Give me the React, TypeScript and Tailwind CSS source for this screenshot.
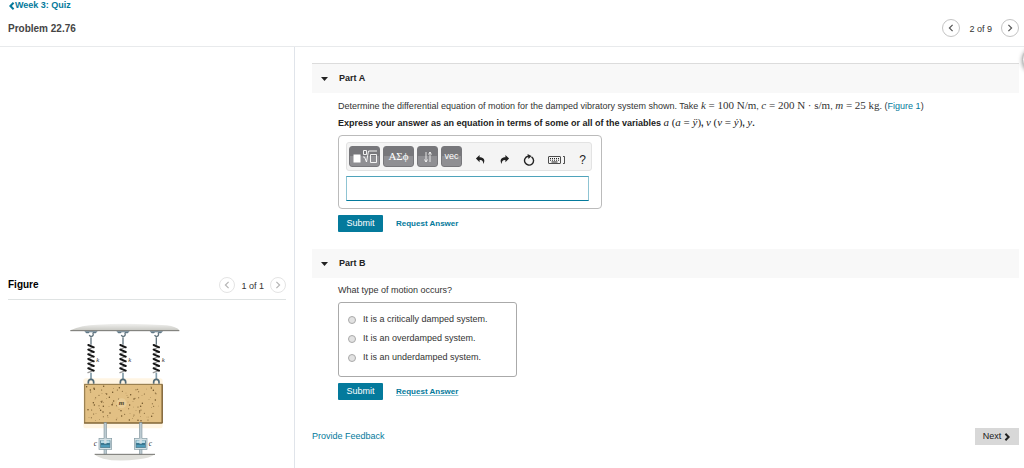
import React, { useState } from "react";

const Chevron = ({ dir, className, width = 2 }: { dir: "left" | "right"; className?: string; width?: number }) => (
  <svg viewBox="0 0 10 10" fill="none" stroke="currentColor" strokeWidth={width} className={className} aria-hidden="true">
    <path d={dir === "left" ? "M7 1 L3 5 L7 9" : "M3 1 L7 5 L3 9"} />
  </svg>
);

const speckles = Array.from({ length: 110 }, (_, i) => ({
  x: 80 + ((i * 83 + ((i * i * 7) % 41)) % 220),
  y: 229 + ((i * 47 + ((i * i * 11) % 29)) % 104),
  r: 1 + (i % 3) * 0.6,
}));

const springs = [93, 189, 289];
const dampers = [136, 242];

function Spring({ x }: { x: number }) {
  return (
    <g>
      <path d={`M${x - 20} 64 h40 l-6 6 h-7 l-3 -3 h-8 l-3 3 h-7z`} fill="#607887" />
      <path d={`M${x + 5} 69 a6 6 0 1 1 -10 6 M${x} 82 V104`} fill="none" stroke="#62747e" strokeWidth="4" />
      <path d={`M${x} 188 V208`} stroke="#849da9" strokeWidth="5" />
      <path d={`M${x - 8} 221 v-5 a8 8 0 0 1 16 0 v5`} fill="none" stroke="#526b78" strokeWidth="5" />
      {[0, 1, 2, 3, 4, 5].map((i) => (
        <g key={i} strokeLinecap="round">
          <path d={`M${x - 9} ${118 + i * 14} L${x + 9} ${111 + i * 14}`} stroke="#9a9a9a" strokeWidth="4" />
          <path d={`M${x - 8} ${105 + i * 14} L${x + 8} ${112 + i * 14}`} stroke="#151515" strokeWidth="6" />
        </g>
      ))}
      <text x={x + 16} y="156" fontSize="20" fontStyle="italic" fill="#333">k</text>
    </g>
  );
}

function Damper({ x }: { x: number }) {
  return (
    <g>
      <rect x={x - 4} y="338" width="8" height="95" fill="#bccbd2" stroke="#71838c" strokeWidth="1.5" />
      <rect x={x - 19} y="385" width="38" height="33" fill="#d5e2e6" stroke="#8299a3" strokeWidth="2" />
      <rect x={x - 14} y="392" width="28" height="21" fill="#4f9cba" stroke="#4b7688" strokeWidth="2" />
      <rect x={x - 13} y="391" width="26" height="8" fill="#b9dbe6" />
      <path d={`M${x - 13} 402 H${x + 13}`} stroke="#285568" strokeWidth="3" />
      <path d={`M${x} 385 V401`} stroke="#d7e1e5" strokeWidth="7" />
    </g>
  );
}

function VibrationFigure() {
  return (
    <svg viewBox="0 0 390 474" className="ml-[60px] block w-[130px] font-['Liberation_Serif',serif]" role="img" aria-label="Mass m supported by three springs k and two dampers c">
      <defs>
        <linearGradient id="ceiling" x2="0" y2="1">
          <stop stopColor="#f0f0ee" /><stop offset="1" stopColor="#c9c9c4" />
        </linearGradient>
      </defs>
      <path d="M31 61 Q65 45 110 44 Q210 38 320 46 Q350 50 358 61Z" fill="url(#ceiling)" />
      <path d="M31 62 H358" stroke="#70706b" strokeWidth="3" />
      <rect x="70" y="205" width="238" height="150" rx="8" fill="#fff5e3" />
      {springs.map((x) => <Spring key={x} x={x} />)}
      <rect x="74" y="223" width="232" height="116" fill="#e2c084" stroke="#8b7141" strokeWidth="3" />
      <path d="M72 339 H307 V223" fill="none" stroke="#7c6033" strokeWidth="3" />
      {speckles.map((p, i) => <circle key={i} cx={p.x} cy={p.y} r={p.r} fill="#6c5027" />)}
      <circle cx="185" cy="280" r="15" fill="#e9cc96" />
      <text x="176" y="286" fontSize="21" fontStyle="italic" fontWeight="bold" fill="#4d4128">m</text>
      {dampers.map((x) => <Damper key={x} x={x} />)}
      <text x="101" y="407" fontSize="22" fontStyle="italic" fill="#333">c</text>
      <text x="266" y="407" fontSize="22" fontStyle="italic" fill="#333">c</text>
      <path d="M104 433 H285 Q270 445 236 448 Q170 456 130 446 Q112 442 104 433Z" fill="#dfdfda" />
      <path d="M104 433 H285" stroke="#74746f" strokeWidth="3" />
    </svg>
  );
}

function PartHeader({ title, top, open, onToggle }: { title: string; top?: boolean; open: boolean; onToggle: () => void }) {
  return (
    <h2 className={top ? "border-t border-[#dcdcdc] bg-[#f8f8f8]" : "bg-[#f8f8f8]"}>
      <button type="button" aria-expanded={open} onClick={onToggle} className="flex h-[29px] w-full items-center gap-[11px] pl-[9px] text-left text-[9px] font-bold text-[#222]">
        <svg viewBox="0 0 7 4" className="h-1 w-[7px]" aria-hidden="true"><path d="M0 0h7L3.5 4z" fill="currentColor" /></svg>
        {title}
      </button>
    </h2>
  );
}

const Var = ({ children }: { children: React.ReactNode }) => <i className="font-['Liberation_Serif',serif] text-[11px] font-normal">{children}</i>;
const Maths = ({ children }: { children: React.ReactNode }) => <span className="font-['Liberation_Serif',serif] text-[11px] font-normal">{children}</span>;

function Actions({ underlined }: { underlined?: boolean }) {
  return (
    <div className="flex items-center gap-[13px]">
      <button type="submit" className="h-[17px] w-[45px] rounded-[1px] bg-[#047a9c] text-[9px] text-white">Submit</button>
      <a href="#answer" className={underlined ? "text-[8px] font-bold text-[#047a9c] underline decoration-[#8fc4d3]" : "text-[8px] font-bold text-[#047a9c]"}>Request Answer</a>
    </div>
  );
}

const keyStyle = "flex h-[21px] items-center justify-center rounded-[3px] border border-[#77777b] bg-linear-to-b from-[#77777b] from-50% to-[#8f8f93] to-50% text-white";

function Toolbar() {
  return (
    <div className="flex h-[29px] items-start rounded-[3px] border border-[#e3e3e3] bg-[#f4f4f4] pt-[3px] pl-[2px] text-[#222]">
      <div className="flex gap-[3px]">
        <button type="button" aria-label="Templates" className={`${keyStyle} w-[31px]`}>
          <svg viewBox="0 0 27 17" className="h-[17px] w-[27px]" fill="none" stroke="white" aria-hidden="true">
            <rect x="2.500" y="6.500" width="7" height="8" fill="white" stroke="none" />
            <path d="M12.500 2.500h3v4h-3z M12 9l1.500 0 2 5 2-11h8.500 M19.500 6.500h6v8h-6z" strokeWidth="0.9" />
          </svg>
        </button>
        <button type="button" className={`${keyStyle} w-[31px] font-['Liberation_Serif',serif] text-[11px]`}>ΑΣϕ</button>
        <button type="button" aria-label="Arrows" className={`${keyStyle} w-[21px]`}>
          <svg viewBox="0 0 10 12" className="h-3 w-2.5" fill="none" stroke="white" strokeWidth="0.8" aria-hidden="true">
            <path d="M3 1v10M1.500 8.500 3 11l1.500-2.500M7 11V1M5.500 3.500 7 1l1.500 2.500" />
          </svg>
        </button>
        <button type="button" className={`${keyStyle} w-[21px] text-[9px]`}>vec</button>
      </div>
      <div className="flex h-[27px] flex-1 items-center justify-between pr-[5px] pl-[13px]">
        <button type="button" aria-label="Undo">
          <svg viewBox="0 0 12 12" className="size-[11px]" aria-hidden="true"><path d="M5 1 1 5l4 4V6.700c3-.2 4 1 4 4.300 3-5 0-7.500-4-7.500z" fill="currentColor" /></svg>
        </button>
        <button type="button" aria-label="Redo">
          <svg viewBox="0 0 12 12" className="size-[11px]" aria-hidden="true"><path d="M7 1l4 4-4 4V6.700c-3-.2-4 1-4 4.300-3-5 0-7.500 4-7.500z" fill="currentColor" /></svg>
        </button>
        <button type="button" aria-label="Reset">
          <svg viewBox="0 0 12 12" className="size-3" fill="none" stroke="currentColor" strokeWidth="1.4" aria-hidden="true">
            <path d="M8.500 2.800A4.500 4.500 0 1 1 5 2.200" /><path d="M4.500 0l4 2L5.500 5z" fill="currentColor" stroke="none" />
          </svg>
        </button>
        <button type="button" aria-label="Keyboard" className="pt-px">
          <svg viewBox="0 0 18 8" className="h-2 w-[18px]" fill="none" stroke="currentColor" aria-hidden="true">
            <rect x=".5" y=".5" width="12" height="7" rx=".5" strokeWidth=".8" />
            <path d="M2 2.500h9M2 4.200h9" strokeDasharray="1 1" /><path d="M3.500 6h6" />
            <path d="M15 .5h1.500v7H15" strokeWidth=".8" />
          </svg>
        </button>
        <button type="button" aria-label="Help" className="text-[12px]">?</button>
      </div>
    </div>
  );
}

function Pager({ label, faint }: { label: string; faint?: boolean }) {
  const circle = faint
    ? "flex size-4 items-center justify-center rounded-full border border-[#e4e4e4] text-[#b5b5b5]"
    : "flex size-[18px] items-center justify-center rounded-full border border-[#c4c4c4] text-[#555]";
  return (
    <div className={faint ? "flex items-center gap-[6px]" : "flex items-center gap-[9px]"}>
      <button type="button" aria-label="Previous" className={circle}><Chevron dir="left" width={1.500} className="size-2" /></button>
      <span className="pt-[3px] text-[9px] text-[#333]">{label}</span>
      <button type="button" aria-label="Next item" className={circle}><Chevron dir="right" width={1.500} className="size-2" /></button>
    </div>
  );
}

const options = ["It is a critically damped system.", "It is an overdamped system.", "It is an underdamped system."];

export default function App() {
  const [openA, setOpenA] = useState(true);
  const [openB, setOpenB] = useState(true);
  const [choice, setChoice] = useState("");
  return (
    <div className="relative flex min-h-screen flex-col overflow-hidden bg-white font-['Liberation_Sans',Arial,sans-serif] text-[9px] text-[#333]">
      <header className="flex h-[47px] items-start justify-between border-b border-[#e8eaec] pr-[5px] pl-2">
        <div>
          <a href="#week-3" className="flex h-3 items-center font-bold text-[#047a9c]">
            <Chevron dir="left" width={2.500} className="mr-[-1px] size-2" />Week 3: Quiz
          </a>
          <h1 className="mt-[9px] text-[10px] leading-4 font-bold text-[#444]">Problem 22.76</h1>
        </div>
        <div className="pt-[19px]"><Pager label="2 of 9" /></div>
      </header>

      <div className="flex flex-1">
        <aside className="w-[295px] shrink-0 border-r border-[#e0e4ea] pt-[230px]">
          <div className="mr-[8px] ml-2 flex h-[23px] items-start justify-between border-b border-[#dfe3e3]">
            <h2 className="text-[10px] leading-4 font-bold text-black">Figure</h2>
            <Pager label="1 of 1" faint />
          </div>
          <div className="mt-[10px]"><VibrationFigure /></div>
        </aside>

        <main className="min-w-0 flex-1 pt-4 pr-[5px] pl-[17px]">
          <PartHeader title="Part A" top open={openA} onToggle={() => setOpenA(!openA)} />
          {openA && (
            <form className="px-[26px] pt-1 pb-[17px]" onSubmit={(e) => e.preventDefault()}>
              <p className="h-[17px] leading-[17px] whitespace-nowrap">
                Determine the differential equation of motion for the damped vibratory system shown. Take <Var>k</Var><Maths> = 100 N/m</Maths>, <Var>c</Var><Maths> = 200 N · s/m</Maths>, <Var>m</Var><Maths> = 25 kg</Maths>. (<a href="#figure-1" className="text-[#047a9c]">Figure 1</a>)
              </p>
              <p className="h-[17px] leading-[17px] font-bold whitespace-nowrap text-[#222]">
                <label htmlFor="equation">Express your answer as an equation in terms of some or all of the variables <Var>a</Var> <Maths>(</Maths><Var>a</Var><Maths> = </Maths><Var>ÿ</Var><Maths>)</Maths>, <Var>v</Var> <Maths>(</Maths><Var>v</Var><Maths> = </Maths><Var>ẏ</Var><Maths>)</Maths>, <Var>y</Var>.</label>
              </p>
              <div className="mt-1 mb-[6px] w-[264px] rounded-[4px] border border-[#bbb] pt-[6px] pr-[9px] pb-[7px] pl-[7px]">
                <Toolbar />
                <input id="equation" type="text" className="mt-[5px] block h-[25px] w-[243px] border border-[#047a9c] border-x-[#8fc4d3] border-t-[#4fa3bb] px-1 text-[11px] outline-none" />
              </div>
              <Actions />
            </form>
          )}
          <PartHeader title="Part B" open={openB} onToggle={() => setOpenB(!openB)} />
          {openB && (
            <form className="px-[26px] pt-1" onSubmit={(e) => e.preventDefault()}>
              <fieldset>
                <legend className="h-[17px] leading-[17px]">What type of motion occurs?</legend>
                <div className="mt-[3px] mb-[6px] flex h-[75px] w-[179px] flex-col rounded-[3px] border border-[#aaa] pt-[7px] pl-[9px]">
                  {options.map((o) => (
                    <label key={o} className="flex h-[19px] items-center gap-[7px] pt-px">
                      <input type="radio" name="motion" value={o} checked={choice === o} onChange={() => setChoice(o)} className="size-2 appearance-none rounded-full border border-[#aaa] bg-[#e2e2e2] checked:bg-[#555]" />
                      {o}
                    </label>
                  ))}
                </div>
              </fieldset>
              <Actions underlined />
            </form>
          )}
          <footer className="mt-[28px] flex items-center justify-between">
            <a href="#feedback" className="text-[#047a9c]">Provide Feedback</a>
            <button type="button" className="flex h-[17px] w-11 items-center justify-center gap-[2px] bg-[#d8d8d8] text-[#222]">
              Next<Chevron dir="right" width={2.500} className="size-2" />
            </button>
          </footer>
        </main>
      </div>
      <div className="absolute top-[46px] -right-[25px] size-[27px] rounded-full border border-[#bbb] bg-[#eee] shadow-[0_1px_4px_#999]" />
    </div>
  );
}
